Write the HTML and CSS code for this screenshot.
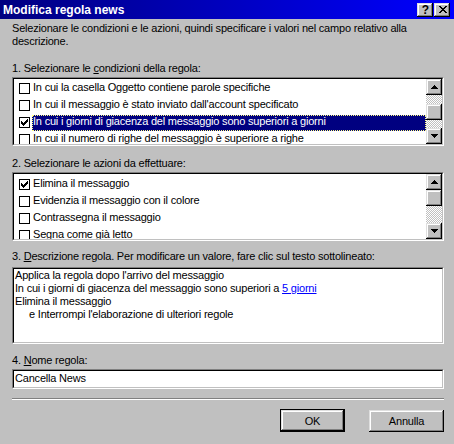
FILE: index.html
```html
<!DOCTYPE html>
<html lang="it">
<head>
<meta charset="utf-8">
<title>Modifica regola news</title>
<link rel="stylesheet" href="styles.css">
</head>
<body>
<div class="win">
  <div class="titlebar">
    <span class="title">Modifica regola news</span>
    <div class="capbtns">
      <span class="capbtn help">?</span>
      <span class="capbtn close">
        <svg width="8" height="7" viewBox="0 0 8 7" shape-rendering="crispEdges"><path d="M0 0h2v1H0zM6 0h2v1H6zM1 1h2v1H1zM5 1h2v1H5zM2 2h4v1H2zM3 3h2v1H3zM2 4h4v1H2zM1 5h2v1H1zM5 5h2v1H5zM0 6h2v1H0zM6 6h2v1H6z" fill="#000"/></svg>
      </span>
    </div>
  </div>

  <div class="content">
    <p class="intro">Selezionare le condizioni e le azioni, quindi specificare i valori nel campo relativo alla<br>descrizione.</p>

    <div class="label label-first">1. Selezionare le <u>c</u>ondizioni della regola:</div>
    <div class="field list">
      <div class="field-inner list-inner">
        <div class="rows">
          <div class="row"><span class="cb"></span><span class="txt">In cui la casella Oggetto contiene parole specifiche</span></div>
          <div class="row"><span class="cb"></span><span class="txt">In cui il messaggio è stato inviato dall'account specificato</span></div>
          <div class="row sel"><span class="cb"><svg width="7" height="7" viewBox="0 0 7 7" shape-rendering="crispEdges"><path d="M6 0h1v1H6zM5 1h2v1H5zM0 2h1v1H0zM4 2h3v1H4zM0 3h2v1H0zM3 3h3v1H3zM0 4h5v1H0zM1 5h3v1H1zM2 6h1v1H2z" fill="#000"/></svg></span><span class="txt">In cui i giorni di giacenza del messaggio sono superiori a giorni</span></div>
          <div class="row"><span class="cb"></span><span class="txt">In cui il numero di righe del messaggio è superiore a righe</span></div>
        </div>
        <div class="sb">
          <span class="raised sb-btn"><svg width="7" height="4" viewBox="0 0 7 4" shape-rendering="crispEdges"><path d="M3 0h1v1H3zM2 1h3v1H2zM1 2h5v1H1zM0 3h7v1H0z" fill="#000"/></svg></span>
          <span class="sb-track sb-track-top"></span>
          <span class="raised sb-thumb"></span>
          <span class="sb-track"></span>
          <span class="raised sb-btn"><svg width="7" height="4" viewBox="0 0 7 4" shape-rendering="crispEdges"><path d="M0 0h7v1H0zM1 1h5v1H1zM2 2h3v1H2zM3 3h1v1H3z" fill="#000"/></svg></span>
        </div>
      </div>
    </div>

    <div class="label label-next">2. Selezionare le azioni da effettuare:</div>
    <div class="field list">
      <div class="field-inner list-inner">
        <div class="rows rows-top">
          <div class="row"><span class="cb"><svg width="7" height="7" viewBox="0 0 7 7" shape-rendering="crispEdges"><path d="M6 0h1v1H6zM5 1h2v1H5zM0 2h1v1H0zM4 2h3v1H4zM0 3h2v1H0zM3 3h3v1H3zM0 4h5v1H0zM1 5h3v1H1zM2 6h1v1H2z" fill="#000"/></svg></span><span class="txt">Elimina il messaggio</span></div>
          <div class="row"><span class="cb"></span><span class="txt">Evidenzia il messaggio con il colore</span></div>
          <div class="row"><span class="cb"></span><span class="txt">Contrassegna il messaggio</span></div>
          <div class="row"><span class="cb"></span><span class="txt">Segna come già letto</span></div>
        </div>
        <div class="sb">
          <span class="raised sb-btn"><svg width="7" height="4" viewBox="0 0 7 4" shape-rendering="crispEdges"><path d="M3 0h1v1H3zM2 1h3v1H2zM1 2h5v1H1zM0 3h7v1H0z" fill="#000"/></svg></span>
          <span class="raised sb-thumb"></span>
          <span class="sb-track"></span>
          <span class="raised sb-btn"><svg width="7" height="4" viewBox="0 0 7 4" shape-rendering="crispEdges"><path d="M0 0h7v1H0zM1 1h5v1H1zM2 2h3v1H2zM3 3h1v1H3z" fill="#000"/></svg></span>
        </div>
      </div>
    </div>

    <div class="label label-desc">3. <u>D</u>escrizione regola. Per modificare un valore, fare clic sul testo sottolineato:</div>
    <div class="field desc">
      <div class="field-inner desc-inner">
        <div>Applica la regola dopo l'arrivo del messaggio</div>
        <div>In cui i giorni di giacenza del messaggio sono superiori a <a class="link" href="#">5 giorni</a></div>
        <div>Elimina il messaggio</div>
        <div class="indent">e Interrompi l'elaborazione di ulteriori regole</div>
      </div>
    </div>

    <div class="label label-name">4. <u>N</u>ome regola:</div>
    <div class="field input">
      <div class="field-inner input-inner">Cancella News</div>
    </div>

    <div class="sep"></div>

    <div class="actions">
      <span class="btn btn-default"><span class="raised btn-face">OK</span></span>
      <span class="btn"><span class="raised btn-face">Annulla</span></span>
    </div>
  </div>
</div>
</body>
</html>
```
FILE: styles.css
```css
html, body {
  margin: 0;
  padding: 0;
}
body {
  background: #c0c0c0;
  font-family: "Liberation Sans", Arial, sans-serif;
  font-size: 11px;
  line-height: 13px;
  letter-spacing: -0.2px;
  color: #000;
}
.win {
  width: 454px;
  height: 444px;
  display: flex;
  flex-direction: column;
  overflow: hidden;
}
.titlebar {
  height: 19px;
  flex: none;
  display: flex;
  align-items: flex-start;
  background: linear-gradient(90deg, #000080 0%, #0000ff 100%);
}
.title {
  flex: 1;
  color: #fff;
  font-weight: bold;
  font-size: 12px;
  letter-spacing: 0;
  line-height: 17px;
  padding: 2px 0 0 3px;
  white-space: nowrap;
}
.capbtns {
  display: flex;
  gap: 1px;
  margin: 3px 4px 0 0;
}
.raised {
  background: #c0c0c0;
  box-shadow: inset -1px -1px #000, inset 1px 1px #dfdfdf, inset -2px -2px #808080, inset 2px 2px #fff;
}
.capbtn {
  width: 16px;
  height: 14px;
  display: flex;
  align-items: center;
  justify-content: center;
  background: #c0c0c0;
  box-shadow: inset -1px -1px #000, inset 1px 1px #dfdfdf, inset -2px -2px #808080, inset 2px 2px #fff;
}
.help {
  font-weight: bold;
  font-size: 12px;
  letter-spacing: 0;
  line-height: 14px;
  padding-left: 1px;
  box-sizing: border-box;
}
.close svg {
  margin: 0 0 1px 1px;
}

.content {
  flex: 1;
  display: flex;
  flex-direction: column;
  padding: 0 10px 0 12px;
}
.intro {
  margin: 3px 0 0;
  white-space: nowrap;
}
.label {
  white-space: nowrap;
}
.label-first { margin-top: 14px; }
.label-next { margin-top: 11px; }
.label-desc { margin-top: 9px; }
.label-name { margin-top: 10px; }

.field {
  box-sizing: border-box;
  border: 1px solid;
  border-color: #808080 #fff #fff #808080;
}
.field-inner {
  box-sizing: border-box;
  height: 100%;
  border: 1px solid;
  border-color: #000 #c0c0c0 #c0c0c0 #000;
  background: #fff;
}

.list {
  margin-top: 2px;
  height: 69px;
}
.list-inner {
  display: flex;
}
.rows {
  flex: 1;
  overflow: hidden;
  padding-top: 2px;
}
.rows-top {
  padding-top: 3px;
}
.row {
  height: 17px;
  display: flex;
  align-items: flex-start;
}
.cb {
  flex: none;
  width: 11px;
  height: 11px;
  box-sizing: border-box;
  border: 1px solid #000;
  background: #fff;
  margin: 2px 0 0 5px;
  display: flex;
  align-items: center;
  justify-content: center;
}
.txt {
  flex: 1;
  height: 16px;
  margin-left: 2px;
  padding-left: 1px;
  white-space: nowrap;
}
.sel .txt {
  background: #000080;
  color: #fff;
  outline: 1px dotted #ffff80;
  outline-offset: -1px;
}

.sb {
  flex: none;
  width: 16px;
  display: flex;
  flex-direction: column;
}
.sb-btn {
  flex: none;
  height: 16px;
  display: flex;
  align-items: center;
  justify-content: center;
}
.sb-thumb {
  flex: none;
  height: 16px;
}
.sb-track {
  flex: 1;
  background: repeating-conic-gradient(#c0c0c0 0 25%, #fff 0 50%) 0 0 / 2px 2px;
}
.sb-track-top {
  flex: none;
  height: 9px;
}

.desc {
  margin-top: 4px;
  height: 77px;
}
.desc-inner {
  padding-left: 1px;
  white-space: nowrap;
}
.indent {
  padding-left: 14px;
}
.link {
  color: #0000ff;
  text-decoration: underline;
}

.input {
  margin-top: 2px;
  height: 20px;
}
.input-inner {
  padding: 1px 0 0 1px;
}

.sep {
  margin-top: 9px;
  border-top: 1px solid #808080;
  border-bottom: 1px solid #fff;
}

.actions {
  margin-top: 9px;
  display: flex;
  justify-content: flex-end;
  align-items: flex-start;
  gap: 24px;
}
.btn {
  display: flex;
  width: 75px;
  height: 22px;
  margin-top: 1px;
}
.btn-default {
  width: 65px;
  height: 23px;
  margin-top: 0;
  border: 1px solid #000;
  box-sizing: border-box;
}
.btn-face {
  flex: 1;
  display: flex;
  align-items: center;
  justify-content: center;
  padding-top: 1px;
  box-sizing: border-box;
}
```
